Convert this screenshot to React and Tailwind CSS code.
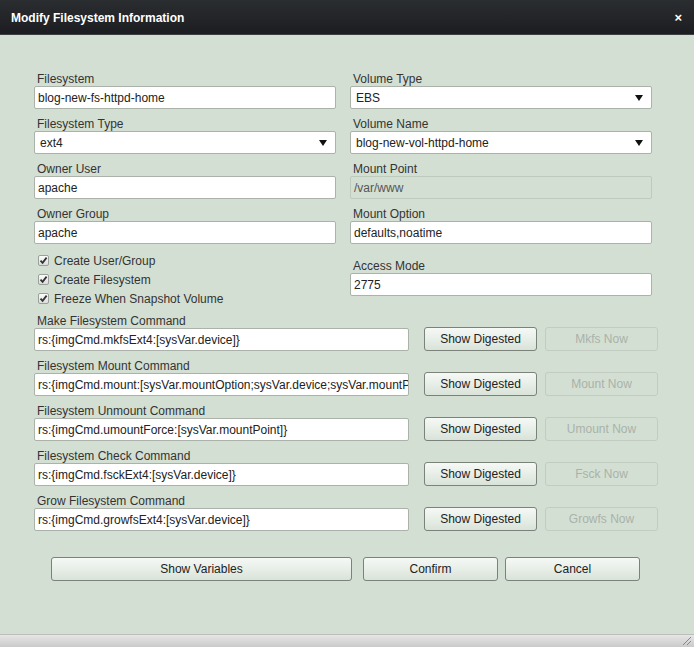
import React from 'react';

const Label = ({ children }) => (
  <div className="h-[15px] pt-[1px] pl-[3px] text-[12px] leading-[14px] text-[#333]">{children}</div>
);

const TextInput = ({ value, disabled, className = '' }) => (
  <div
    className={`h-[23px] flex items-center px-[3px] rounded-[2px] border text-[12px] whitespace-nowrap overflow-hidden ${
      disabled
        ? 'bg-[#d3dfd3] border-[#bccbbc] text-[#555]'
        : 'bg-white border-[#aab2aa] text-[#222]'
    } ${className}`}
  >
    {value}
  </div>
);

const Select = ({ value }) => (
  <div className="h-[23px] flex items-center justify-between px-[5px] rounded-[2px] border border-[#aab2aa] bg-white text-[12px] text-[#222]">
    <span>{value}</span>
    <span className="w-0 h-0 mr-[3px] border-l-[4px] border-r-[4px] border-t-[6px] border-l-transparent border-r-transparent border-t-[#111]" />
  </div>
);

const Field = ({ label, children, className = '' }) => (
  <div className={`mb-[7px] ${className}`}>
    <Label>{label}</Label>
    {children}
  </div>
);

const Check = ({ label }) => (
  <div className="h-[19px] flex items-center pl-[4px] text-[12px] text-[#333]">
    <span className="w-[11px] h-[11px] mr-[5px] flex items-center justify-center rounded-[2px] border border-[#9aa09a] bg-gradient-to-b from-[#fdfdfd] to-[#dcdcdc]">
      <svg width="9" height="9" viewBox="0 0 9 9">
        <path d="M1.5 4.6 L3.6 6.8 L7.6 1.6" fill="none" stroke="#333" strokeWidth="1.8" />
      </svg>
    </span>
    {label}
  </div>
);

const Button = ({ children, disabled, className = '' }) =>
  disabled ? (
    <div className={`h-[24px] flex items-center justify-center rounded-[3px] border border-[#c2ccc2] text-[12px] text-[#a9b2a9] ${className}`}>
      {children}
    </div>
  ) : (
    <div className={`h-[24px] flex items-center justify-center rounded-[3px] border border-[#7a827a] bg-gradient-to-b from-[#f6f9f6] to-[#d9e3d9] text-[12px] text-[#222] ${className}`}>
      {children}
    </div>
  );

const commands = [
  ['Make Filesystem Command', 'rs:{imgCmd.mkfsExt4:[sysVar.device]}', 'Mkfs Now'],
  ['Filesystem Mount Command', 'rs:{imgCmd.mount:[sysVar.mountOption;sysVar.device;sysVar.mountPoint]}', 'Mount Now'],
  ['Filesystem Unmount Command', 'rs:{imgCmd.umountForce:[sysVar.mountPoint]}', 'Umount Now'],
  ['Filesystem Check Command', 'rs:{imgCmd.fsckExt4:[sysVar.device]}', 'Fsck Now'],
  ['Grow Filesystem Command', 'rs:{imgCmd.growfsExt4:[sysVar.device]}', 'Growfs Now'],
];

export default function App() {
  return (
    <div className="w-[694px] h-[647px] flex flex-col bg-[#d4dfd3]" style={{ fontFamily: '"Liberation Sans", Arial, sans-serif' }}>
      {/* title bar */}
      <div className="h-[35px] flex items-center justify-between pl-[11px] pr-[12px] bg-gradient-to-b from-[#2b2e31] to-[#1b1d20] border-b border-[#3c4043]">
        <span className="text-white font-bold text-[12px] pt-[1px]">Modify Filesystem Information</span>
        <span className="text-white font-bold text-[13px] leading-none">×</span>
      </div>

      {/* body */}
      <div className="flex-1 pt-[36px] pl-[34px]">
        <div className="flex gap-[14px]">
          <div className="w-[302px]">
            <Field label="Filesystem"><TextInput value="blog-new-fs-httpd-home" /></Field>
            <Field label="Filesystem Type"><Select value="ext4" /></Field>
            <Field label="Owner User"><TextInput value="apache" /></Field>
            <Field label="Owner Group" className="mb-[6px]"><TextInput value="apache" /></Field>
            <Check label="Create User/Group" />
            <Check label="Create Filesystem" />
            <Check label="Freeze When Snapshot Volume" />
          </div>
          <div className="w-[302px]">
            <Field label="Volume Type"><Select value="EBS" /></Field>
            <Field label="Volume Name"><Select value="blog-new-vol-httpd-home" /></Field>
            <Field label="Mount Point"><TextInput value="/var/www" disabled /></Field>
            <Field label="Mount Option" className="mb-[14px]"><TextInput value="defaults,noatime" /></Field>
            <Field label="Access Mode"><TextInput value="2775" /></Field>
          </div>
        </div>

        <div className="mt-[5px]">
          {commands.map(([label, value, action]) => (
            <div key={label} className="flex items-end mb-[7px]">
              <div className="w-[375px]">
                <Label>{label}</Label>
                <TextInput value={value} />
              </div>
              <Button className="w-[113px] ml-[15px]">Show Digested</Button>
              <Button disabled className="w-[113px] ml-[8px]">{action}</Button>
            </div>
          ))}
        </div>

        <div className="flex mt-[26px] ml-[17px]">
          <Button className="w-[301px]">Show Variables</Button>
          <Button className="w-[135px] ml-[11px]">Confirm</Button>
          <Button className="w-[135px] ml-[7px]">Cancel</Button>
        </div>
      </div>

      {/* status bar */}
      <div className="h-[13px] flex justify-end items-end bg-gradient-to-b from-[#e6e6e6] to-[#cacaca] border-t border-[#bdbdbd]">
        <svg width="11" height="11" viewBox="0 0 11 11" className="mr-[2px] mb-[1px]">
          <path d="M10 2 L2 10 M10 6 L6 10" stroke="#888" strokeWidth="1" />
        </svg>
      </div>
    </div>
  );
}
